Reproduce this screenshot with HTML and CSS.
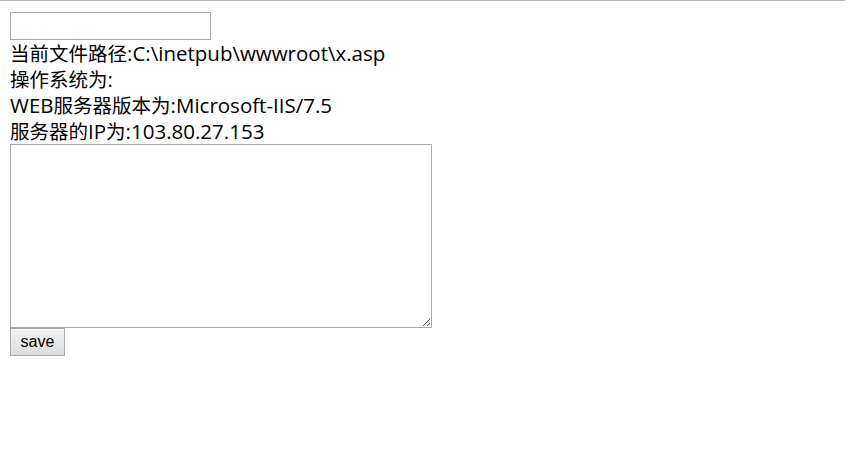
FILE: index.html
```html
<!DOCTYPE html>
<html>
<head>
<meta charset="utf-8">
<link rel="stylesheet" href="styles.css">
</head>
<body>
<div class="topline"></div>
<form class="page">
<input class="field" type="text">
<div class="line">当前文件路径<span class="en">:C:\inetpub\wwwroot\x.asp</span></div>
<div class="line">操作系统为<span class="en">:</span></div>
<div class="line"><span class="en">WEB</span>服务器版本为<span class="en">:Microsoft-IIS/7.5</span></div>
<div class="line">服务器的<span class="en">IP</span>为<span class="en">:103.80.27.153</span></div>
<textarea class="editor"></textarea>
<button class="save" type="button">save</button>
</form>
</body>
</html>
```
FILE: styles.css
```css
html, body {
  margin: 0;
  padding: 0;
  background: #fff;
}
.topline {
  height: 1px;
  background: #b4b4b4;
}
.page {
  display: flex;
  flex-direction: column;
  align-items: flex-start;
  padding: 11px 0 0 10px;
  margin: 0;
  font-family: "Open Sans", "Noto Sans CJK SC", sans-serif;
  color: #000;
}
.field {
  box-sizing: border-box;
  width: 201px;
  height: 28px;
  margin: 0;
  border: 1px solid #a9a9a9;
  padding: 2px 4px;
  outline: none;
}
.line {
  font-size: 19.5px;
  line-height: 26px;
  height: 26px;
  white-space: nowrap;
}
.en {
  font-size: 20.5px;
}
.editor {
  box-sizing: border-box;
  width: 422px;
  height: 184px;
  margin: 0;
  border: 1px solid #a9a9a9;
  padding: 2px;
  resize: both;
  outline: none;
}
.save {
  box-sizing: border-box;
  width: 55px;
  height: 28px;
  margin: 0;
  padding: 0;
  border: 1px solid #a9a9a9;
  background: linear-gradient(#f3f3f3, #dcdcdc);
  font-family: "Liberation Sans", Arial, sans-serif;
  font-size: 16px;
  color: #000;
}
```
